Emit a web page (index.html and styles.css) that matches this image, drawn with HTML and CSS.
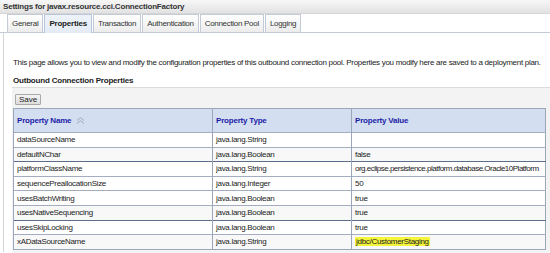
FILE: index.html
```html
<!DOCTYPE html>
<html lang="en">
<head>
    <meta charset="UTF-8">
    <title>Settings for javax.resource.cci.ConnectionFactory</title>
    <link rel="stylesheet" href="styles.css">
</head>
<body>
    <div class="title-bar">Settings for javax.resource.cci.ConnectionFactory</div>
    <div class="tabs">
        <span class="tab">General</span>
        <span class="tab active">Properties</span>
        <span class="tab">Transaction</span>
        <span class="tab">Authentication</span>
        <span class="tab">Connection Pool</span>
        <span class="tab">Logging</span>
    </div>
    <div class="content">
        <p class="intro">This page allows you to view and modify the configuration properties of this outbound connection pool. Properties you modify here are saved to a deployment plan.</p>
        <h2 class="section-title">Outbound Connection Properties</h2>
        <div class="table-panel">
            <div class="toolbar">
                <button type="button" class="save-btn">Save</button>
            </div>
            <table class="props">
                <thead>
                    <tr>
                        <th class="col-name">Property Name
                            <svg class="sort-icon" width="9" height="7" viewBox="0 0 9 7">
                                <path d="M1 3.5 L4.5 0.8 L8 3.5 M1 6.4 L4.5 3.7 L8 6.4" fill="none" stroke="#a4a9b3" stroke-width="1"/>
                            </svg>
                        </th>
                        <th class="col-type">Property Type</th>
                        <th>Property Value</th>
                    </tr>
                </thead>
                <tbody>
                    <tr><td>dataSourceName</td><td>java.lang.String</td><td></td></tr>
                    <tr class="alt"><td>defaultNChar</td><td>java.lang.Boolean</td><td>false</td></tr>
                    <tr class="dark-top"><td>platformClassName</td><td>java.lang.String</td><td class="long-value">org.eclipse.persistence.platform.database.Oracle10Platform</td></tr>
                    <tr><td>sequencePreallocationSize</td><td>java.lang.Integer</td><td>50</td></tr>
                    <tr><td>usesBatchWriting</td><td>java.lang.Boolean</td><td>true</td></tr>
                    <tr class="alt"><td>usesNativeSequencing</td><td>java.lang.Boolean</td><td>true</td></tr>
                    <tr class="dark-top"><td>usesSkipLocking</td><td>java.lang.Boolean</td><td>true</td></tr>
                    <tr class="alt"><td>xADataSourceName</td><td>java.lang.String</td><td><span class="highlight">jdbc/CustomerStaging</span></td></tr>
                </tbody>
            </table>
        </div>
    </div>
</body>
</html>
```

FILE: styles.css
```css
* {
    margin: 0;
    padding: 0;
    box-sizing: border-box;
}

body {
    font-family: "Liberation Sans", Arial, sans-serif;
    font-size: 8px;
    letter-spacing: -0.3px;
    color: #222;
    background-color: #ffffff;
    width: 550px;
    height: 253px;
    overflow: hidden;
}

.title-bar {
    height: 14px;
    line-height: 13px;
    padding-left: 3px;
    font-weight: bold;
    letter-spacing: -0.2px;
    color: #333;
    background: linear-gradient(#f7f7f7, #e2e2e2);
    border-bottom: 1px solid #d6d6d6;
}

.tabs {
    display: flex;
    align-items: flex-end;
    height: 19px;
    padding-left: 7px;
    border-bottom: 1px solid #c4cbd6;
}

.tab {
    height: 18px;
    line-height: 17px;
    padding: 0 4px;
    margin-right: 1px;
    color: #333;
    border: 1px solid #c4cbd6;
    border-bottom: none;
    background: linear-gradient(#ffffff, #ececec);
}

.tab.active {
    font-weight: bold;
    letter-spacing: -0.2px;
    color: #222;
    height: 19px;
    margin-bottom: -1px;
    background: linear-gradient(#eef3fa, #e4ebf5);
    border-color: #b7c6dc;
}

.content {
    margin-left: 3px;
    border-left: 1px solid #d4d4d4;
    height: 219px;
    padding-top: 25px;
}

.intro {
    padding-left: 9px;
    line-height: 10px;
    white-space: nowrap;
}

.section-title {
    font-size: 8px;
    font-weight: bold;
    letter-spacing: -0.2px;
    color: #222;
    padding-left: 9px;
    margin-top: 8px;
    line-height: 10px;
}

.table-panel {
    margin: 1px 0 0 8px;
    background-color: #f3f3f3;
    border-top: 1px solid #dcdcdc;
    height: 175px;
    padding-top: 6px;
}

.toolbar {
    padding-left: 3px;
    height: 14px;
}

.save-btn {
    font-family: "Liberation Sans", Arial, sans-serif;
    font-size: 8px;
    height: 11px;
    line-height: 9px;
    padding: 0 3px;
    color: #222;
    background: linear-gradient(#f4f4f4, #dcdcdc);
    border: 1px solid #a9a9a9;
    border-radius: 1px;
}

.props {
    width: 533px;
    margin-left: 1px;
    table-layout: fixed;
    border-collapse: collapse;
    background-color: #ffffff;
    border: 1px solid #9aa6ba;
}

.props th {
    height: 24px;
    text-align: left;
    padding-left: 3px;
    color: #1c1ca8;
    font-weight: bold;
    letter-spacing: -0.2px;
    background-color: #d3def0;
    border-left: 1px solid #9aa6ba;
}

.props .col-name {
    width: 199px;
}

.props .col-type {
    width: 139px;
}

.sort-icon {
    margin-left: 3px;
    vertical-align: -1px;
}

.props td {
    height: 14.6px;
    padding-left: 3px;
    border-top: 1px solid #a3adbf;
    border-left: 1px solid #9aa6ba;
    white-space: nowrap;
}

.props td.long-value {
    letter-spacing: -0.5px;
}

.props tr.alt td {
    background-color: #f8f8f8;
}

.props tr.dark-top td {
    border-top-color: #5d6e8a;
}

.highlight {
    background-color: #f4f43a;
    padding: 0 1px;
}
```
